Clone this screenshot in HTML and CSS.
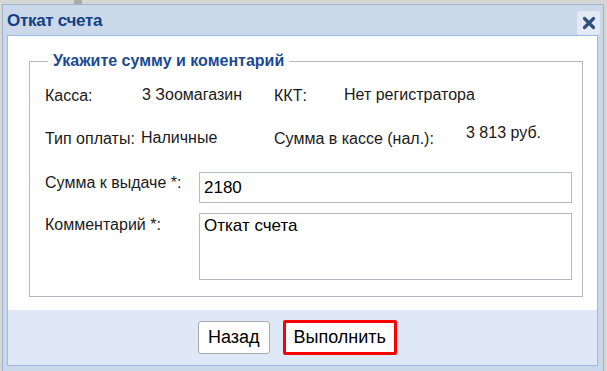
FILE: index.html
```html
<!DOCTYPE html>
<html lang="ru">
<head>
    <meta charset="UTF-8">
    <title>Откат счета</title>
    <link rel="stylesheet" href="styles.css">
</head>
<body>

    <div class="backdrop">
        <span class="backdrop-bar"></span>
    </div>

    <div class="window">
        <div class="window-header">
            <span class="window-title">Откат счета</span>
            <button class="close-btn" type="button" aria-label="Закрыть">
                <svg width="14" height="14" viewBox="0 0 14 14">
                    <path d="M2.5 2.5 L11.5 11.5 M11.5 2.5 L2.5 11.5" stroke="#2f4f7e" stroke-width="3.2" stroke-linecap="round"/>
                </svg>
            </button>
        </div>

        <div class="window-panel">
            <div class="window-body">
                <fieldset class="group">
                    <legend>Укажите сумму и коментарий</legend>

                    <div class="info-row">
                        <span class="lbl lbl-kassa">Касса:</span>
                        <span class="val val-kassa">3 Зоомагазин</span>
                        <span class="lbl lbl-kkt">ККТ:</span>
                        <span class="val">Нет регистратора</span>
                    </div>

                    <div class="info-row second">
                        <span class="lbl lbl-pay">Тип оплаты:</span>
                        <span class="val val-pay">Наличные</span>
                        <span class="lbl lbl-sum">Сумма в кассе (нал.):</span>
                        <span class="val val-sum">3 813 руб.</span>
                    </div>

                    <div class="form-row">
                        <label class="form-label" for="amount">Сумма к выдаче *:</label>
                        <input class="form-input" id="amount" type="text" value="2180">
                    </div>

                    <div class="form-row">
                        <label class="form-label label-comment" for="comment">Комментарий *:</label>
                        <textarea class="form-area" id="comment">Откат счета</textarea>
                    </div>
                </fieldset>
            </div>

            <div class="window-footer">
                <button type="button" class="btn">Назад</button>
                <button type="button" class="btn btn-run">Выполнить</button>
            </div>
        </div>
    </div>

</body>
</html>
```

FILE: styles.css
```css
* {
    margin: 0;
    padding: 0;
    box-sizing: border-box;
    font-family: 'Liberation Sans', Arial, sans-serif;
}
body {
    width: 607px;
    height: 371px;
    overflow: hidden;
    background: #d6d6d6;
    position: relative;
}
.backdrop {
    height: 4px;
}
.backdrop-bar {
    position: absolute;
    left: 74px;
    top: 0;
    width: 8px;
    height: 4px;
    background: #a9a9a9;
}
.window {
    margin-left: 2px;
    width: 602px;
    height: 372px;
    background: #cbd8e9;
    border: 1px solid #9fb5d2;
    padding: 0 5px 0 4px;
}
.window-header {
    height: 30px;
    display: flex;
    align-items: center;
    justify-content: space-between;
}
.window-title {
    font-size: 17px;
    font-weight: bold;
    color: #123f86;
    margin-left: 0;
    margin-top: 1px;
    letter-spacing: -0.3px;
}
.close-btn {
    width: 23px;
    height: 24px;
    margin-top: 5px;
    margin-right: -2px;
    border: none;
    border-radius: 3px;
    background: #e3eaf5;
    display: flex;
    align-items: center;
    justify-content: center;
}
.window-panel {
    border: 1px solid #99bbe8;
    height: 331px;
    display: flex;
    flex-direction: column;
}
.window-body {
    background: #fff;
    height: 274px;
    padding: 16px 14px 0 21px;
}
.group {
    border: 1px solid #b5b8c8;
    padding: 0 10px 0 15px;
    height: 245px;
}
.group legend {
    margin-left: 3px;
    padding: 0 5px;
    font-size: 16px;
    font-weight: bold;
    color: #1b4a94;
    line-height: 18px;
}
.info-row {
    display: flex;
    font-size: 16px;
    color: #1a1a1a;
    line-height: 18px;
    margin-top: 17px;
}
.info-row.second {
    margin-top: 25px;
}
.lbl, .val {
    white-space: nowrap;
}
.val {
    position: relative;
    top: -1px;
}
.lbl-kassa { width: 97px; }
.val-kassa { width: 132px; }
.lbl-kkt { width: 70px; }
.lbl-pay { width: 96px; }
.val-pay { width: 133px; }
.lbl-sum { width: 192px; }
.val-sum { top: -6px; }
.form-row {
    display: flex;
    align-items: flex-start;
    margin-top: 24px;
}
.form-row + .form-row {
    margin-top: 10px;
}
.form-label {
    width: 154px;
    font-size: 16px;
    color: #1a1a1a;
    padding-top: 2px;
}
.label-comment {
    padding-top: 3px;
}
.form-input, .form-area {
    width: 373px;
    border: 1px solid #b5b8c8;
    font-size: 17px;
    color: #000;
    background: #fff;
    padding: 0 4px;
}
.form-input {
    height: 31px;
}
.form-area {
    height: 67px;
    resize: none;
    padding-top: 2px;
    line-height: 20px;
}
.window-footer {
    flex: 1;
    background: #dfe8f6;
    display: flex;
    align-items: center;
    justify-content: center;
    gap: 13px;
    padding-right: 10px;
}
.btn {
    font-size: 18px;
    color: #000;
    background: #fff;
    border: 1px solid #a9a9a9;
    border-radius: 3px;
    height: 33px;
    padding: 0 9px;
}
.btn-run {
    border: 3px solid #ff0000;
    border-radius: 2px;
    height: 35px;
    padding: 0 8px;
}
```
